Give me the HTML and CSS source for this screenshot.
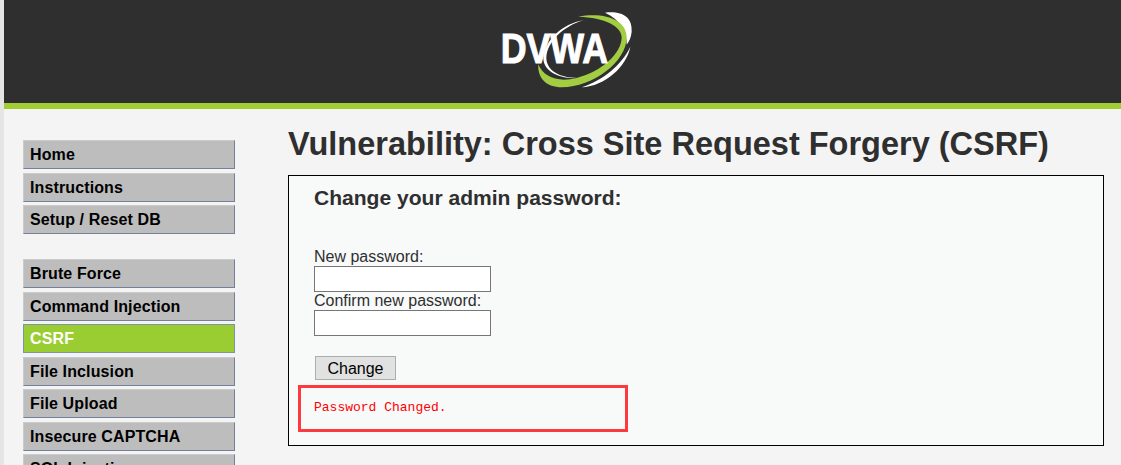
FILE: index.html
```html
<!DOCTYPE html>
<html lang="en">
<head>
  <meta charset="UTF-8">
  <meta name="viewport" content="width=device-width, initial-scale=1.0">
  <title>Vulnerability: Cross Site Request Forgery (CSRF)</title>
  <link rel="stylesheet" href="styles.css">
</head>
<body>
  <div class="wrapper">
    <header class="header">
      <!-- logo, drawn with the swooshes behind the text -->
      <svg class="logo" viewBox="39 0 420 309" width="140" height="103">
        <path class="swoosh-white" d="M375 38 C425 32 458 50 455 95 C453 112 448 124 440 134 C442 95 420 58 375 38 Z"/>
        <path class="swoosh-white" d="M451 140 C440 200 375 258 305 262 C370 240 425 195 451 140 Z"/>
        <path class="swoosh-white" d="M312 60 C245 72 195 120 190 175 C190 212 235 238 292 234 C240 234 198 212 199 172 C202 125 250 78 312 60 Z"/>
        <path class="swoosh-green" d="M295 50 C375 36 440 60 440 112 C440 185 340 262 245 262 C200 262 172 235 175 193 C190 232 235 248 290 234 C365 215 425 160 425 112 C425 80 375 52 295 50 Z"/>
        <text class="logo-text" x="62" y="190" textLength="322" lengthAdjust="spacingAndGlyphs">DVWA</text>
      </svg>
    </header>

    <div class="page">
      <nav class="sidebar">
        <ul class="menu">
          <li><a href="#">Home</a></li>
          <li><a href="#">Instructions</a></li>
          <li><a href="#">Setup / Reset DB</a></li>
        </ul>
        <ul class="menu">
          <li><a href="#">Brute Force</a></li>
          <li><a href="#">Command Injection</a></li>
          <li class="selected"><a href="#">CSRF</a></li>
          <li><a href="#">File Inclusion</a></li>
          <li><a href="#">File Upload</a></li>
          <li><a href="#">Insecure CAPTCHA</a></li>
          <li><a href="#">SQL Injection</a></li>
        </ul>
      </nav>

      <main class="main">
        <h1>Vulnerability: Cross Site Request Forgery (CSRF)</h1>
        <div class="vulnerable-code">
          <h3>Change your admin password:</h3>
          <form class="pw-form" onsubmit="return false">
            <label for="pw-new">New password:</label>
            <input id="pw-new" type="password">
            <label for="pw-conf">Confirm new password:</label>
            <input id="pw-conf" type="password">
            <button class="change-btn" type="submit">Change</button>
          </form>
          <pre class="result">Password Changed.</pre>
          <div class="highlight"></div>
        </div>
      </main>
    </div>
  </div>
</body>
</html>
```

FILE: styles.css
```css
html, body {
  margin: 0;
  height: 465px;
  overflow: hidden;
}

body {
  background-color: #e5e5e5;
  padding-left: 4px;
  font-family: "Liberation Sans", Arial, sans-serif;
  font-size: 16px;
  color: #2f2f2f;
}

.wrapper {
  background-color: #f4f4f4;
  height: 465px;
}

.header {
  height: 103px;
  background-color: #2f2f2f;
  border-bottom: 6px solid #a2cd33;
  display: flex;
  justify-content: center;
}

.logo-text {
  font-family: "Liberation Sans", Arial, sans-serif;
  font-weight: bold;
  font-size: 130px;
  fill: #fff;
  stroke: #fff;
  stroke-width: 3px;
}

.swoosh-white {
  fill: #fff;
}

.swoosh-green {
  fill: #a2cd42;
}

.page {
  display: flex;
}

.sidebar {
  width: 212px;
  margin-left: 19px;
  padding-top: 31px;
}

.menu {
  list-style: none;
  margin: 0 0 21.5px 0;
  padding: 0;
}

.menu li {
  height: 32.5px;
}

.menu a {
  display: block;
  box-sizing: border-box;
  height: 29px;
  padding-left: 6px;
  line-height: 28px;
  font-weight: bold;
  letter-spacing: 0.12px;
  color: #000;
  text-decoration: none;
  background-color: #bdbdbd;
  border-top: 1px solid #cbcbcb;
  border-left: 1px solid #cbcbcb;
  border-right: 1px solid #72809c;
  border-bottom: 1px solid #72809c;
}

.menu .selected a {
  color: #fff;
  background-color: #9acd32;
  border-color: #7f93a6;
}

.main {
  margin-left: 53px;
  width: 816px;
}

.main h1 {
  margin: 0;
  padding-top: 16px;
  height: 50px;
  font-size: 32.5px;
  line-height: 38px;
  color: #2f2f2f;
}

.vulnerable-code {
  position: relative;
  box-sizing: border-box;
  height: 271px;
  padding: 10px 25px 0;
  background-color: #f8f9f9;
  border: 1px solid #000;
}

.vulnerable-code h3 {
  margin: 0;
  height: 46px;
  font-size: 21.05px;
  line-height: 23px;
  color: #2f2f2f;
}

.pw-form {
  padding-top: 16px;
}

.pw-form label {
  display: block;
  height: 18px;
  line-height: 18px;
}

.pw-form input {
  display: block;
  box-sizing: border-box;
  width: 177px;
  height: 26px;
  margin: 0;
  background-color: #fff;
  border: 1px solid #767676;
}

.change-btn {
  display: block;
  box-sizing: border-box;
  width: 81px;
  height: 24px;
  margin: 20px 0 0 1px;
  padding: 1px 0 0;
  font-family: "Liberation Sans", Arial, sans-serif;
  font-size: 16px;
  color: #000;
  background-color: #e1e1e1;
  border: 1px solid #adadad;
}

.result {
  margin: 20px 0 0;
  font-family: "Liberation Mono", monospace;
  font-size: 13px;
  line-height: 15px;
  color: #f00;
}

/* red box marked over the result */
.highlight {
  position: absolute;
  left: 9px;
  top: 209px;
  width: 324px;
  height: 41px;
  border: 3px solid #fd3a3d;
}
```
